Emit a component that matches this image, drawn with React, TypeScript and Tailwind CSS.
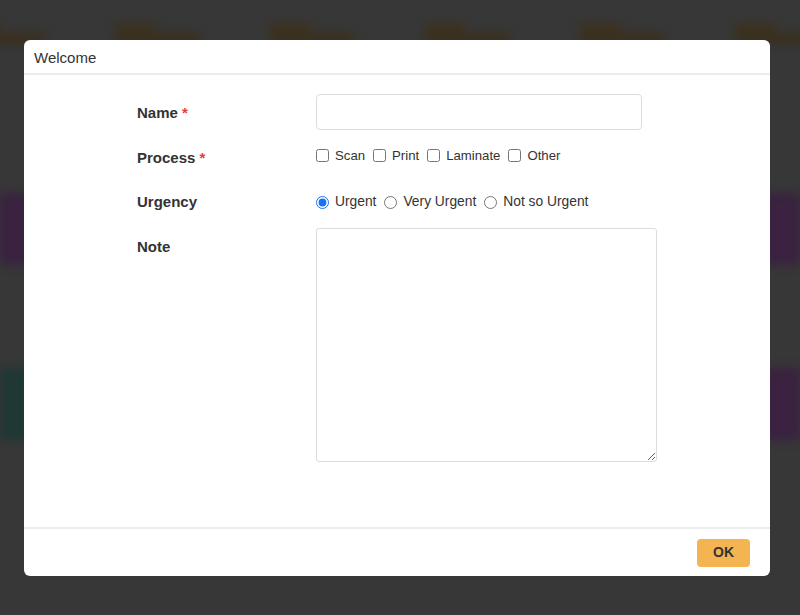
import React from 'react';

const font = { fontFamily: '"Liberation Sans", Arial, sans-serif' };

const cols = [0, 1, 2, 3, 4, 5];

const Backdrop: React.FC = () => (
  <div className="flex flex-col blur-[5px]">
    {/* header words row */}
    <div className="flex gap-[70px] mt-[24px] -ml-[40px]">
      {cols.map((c) => (
        <div key={c} className="w-[85px] flex flex-col gap-[2px]">
          <div className="w-[40px] h-[8px] bg-[#3e3019]" />
          <div className="w-[85px] h-[9px] bg-[#3a2e19]" />
        </div>
      ))}
    </div>
    {/* side bands */}
    <div className="flex justify-between mt-[150px]">
      <div className="w-[30px] h-[72px] bg-[#3a2240]" />
      <div className="w-[40px] h-[72px] bg-[#3a2240]" />
    </div>
    <div className="flex justify-between mt-[103px]">
      <div className="w-[30px] h-[72px] bg-[#1f3834]" />
      <div className="w-[40px] h-[72px] bg-[#3a2240]" />
    </div>
  </div>
);

export default function App() {
  return (
    <div className="relative w-[800px] h-[615px] overflow-hidden bg-[#373737]" style={font}>
      <Backdrop />

      <div className="absolute left-[24px] top-[40px] w-[746px] h-[536px] bg-white rounded-[6px] flex flex-col text-[#333]">
        <div className="h-[35px] px-[10px] pt-[3px] flex items-center border-b-2 border-[#ececec] text-[15px]">
          Welcome
        </div>

        <div className="flex-1 flex justify-center pt-[19px]">
          <div className="w-[520px] flex flex-col">
            <div className="flex h-[36px] items-center">
              <div className="w-[179px] pt-[2px] text-[15px] font-bold">
                Name <span className="text-[#e53e3e]">*</span>
              </div>
              <input className="w-[326px] h-[36px] border border-[#dcdcdc] rounded-[4px] px-2 outline-none" />
            </div>

            <div className="flex h-[36px] items-center mt-[8px]">
              <div className="w-[179px] pt-[4px] text-[15px] font-bold">
                Process <span className="text-[#e53e3e]">*</span>
              </div>
              <div className="flex items-center text-[13.2px] gap-[8px]">
                {['Scan', 'Print', 'Laminate', 'Other'].map((p) => (
                  <label key={p} className="flex items-center gap-[6px]">
                    <input type="checkbox" className="m-0 w-[13px] h-[13px]" />
                    {p}
                  </label>
                ))}
              </div>
            </div>

            <div className="flex h-[36px] items-center mt-[9px]">
              <div className="w-[179px] pt-[2px] text-[15px] font-bold">Urgency</div>
              <div className="flex items-center text-[13.8px] gap-[8px] pt-[2px]">
                {['Urgent', 'Very Urgent', 'Not so Urgent'].map((u, i) => (
                  <label key={u} className="flex items-center gap-[6px]">
                    <input
                      type="radio"
                      name="urgency"
                      defaultChecked={i === 0}
                      className="m-0 w-[13px] h-[13px] accent-[#1a73f5]"
                    />
                    {u}
                  </label>
                ))}
              </div>
            </div>

            <div className="flex mt-[9px]">
              <div className="w-[179px] h-[36px] pt-[2px] flex items-center text-[15px] font-bold">Note</div>
              <textarea className="w-[342px] h-[234px] border border-[#dcdcdc] rounded-[3px] p-2 outline-none" />
            </div>
          </div>
        </div>

        <div className="h-[49px] border-t-2 border-[#ececec] flex items-center justify-end px-[20px]">
          <button className="w-[53px] h-[28px] rounded-[4px] bg-[#f5b452] text-[14px] font-bold text-[#333]">
            OK
          </button>
        </div>
      </div>
    </div>
  );
}
